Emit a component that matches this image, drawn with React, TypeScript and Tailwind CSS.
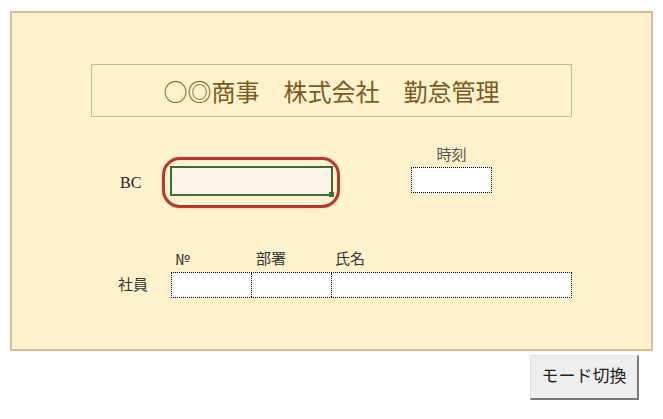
const font = { fontFamily: '"Liberation Serif", "Noto Sans CJK JP", serif' };
const cjk = { fontFamily: '"Noto Sans CJK JP", serif' };

export default function App() {
  return (
    <div className="w-[663px] h-[419px] bg-white pt-[11px] pl-[10px] overflow-hidden" style={font}>
      <div className="w-[643px] h-[340px] border-2 border-[#d8be93] bg-[#fff2cc]">
        <div
          className="ml-[79px] mt-[51px] w-[481px] h-[53px] border border-[#cfb68c] flex items-center justify-center text-[24px] leading-none text-[#7d5a22]"
          style={cjk}
        >
          ○◎商事　株式会社　勤怠管理
        </div>

        <div className="flex items-start mt-[30px]">
          <div className="ml-[108px] mt-[10px] flex items-center">
            <span className="w-[42px] text-[16px] text-[#222]">BC</span>
            <div className="w-[178px] h-[51px] border-[3px] border-[#b2392f] rounded-[18px] pl-[5px] pt-[6px] shadow-[0_0_2px_#f0a79a]">
              <div className="relative w-[163px] h-[30px] border-2 border-[#3e6b3c] bg-[#fcf6e9]">
                <span className="absolute -right-[3px] -bottom-[3px] w-[5px] h-[5px] bg-[#3e6b3c]" />
              </div>
            </div>
          </div>
          <div className="ml-[71px] w-[81px] flex flex-col items-center">
            <span className="h-[20px] text-[15px] leading-[16px] text-[#555]">時刻</span>
            <div className="w-[81px] h-[26px] border border-dotted border-black bg-white" />
          </div>
        </div>

        <div className="mt-[43px] flex">
          <div className="w-[159px] flex flex-col">
            <div className="h-[21px]" />
            <div className="h-[26px] pl-[106px] flex items-center text-[15px] text-[#333]">社員</div>
          </div>
          <div className="flex flex-col">
            <div className="h-[21px] flex items-start text-[15px] leading-[16px] text-[#333]">
              <span className="w-[81px] pl-[4px]" style={cjk}>№</span>
              <span className="w-[80px] pl-[4px]">部署</span>
              <span className="pl-[3px]">氏名</span>
            </div>
            <div className="h-[26px] w-[401px] flex border border-dotted border-black bg-white">
              <div className="w-[80px] border-r border-dotted border-black" />
              <div className="w-[80px] border-r border-dotted border-black" />
              <div className="flex-1" />
            </div>
          </div>
        </div>
      </div>

      <div className="ml-[520px] mt-[4px] w-[109px] h-[45px] flex items-center justify-center bg-[#efefef] border border-[#e2e2e2] border-r-2 border-b-2 border-r-[#7a7a7a] border-b-[#7a7a7a] text-[17px] text-[#222]">
        モード切換
      </div>
    </div>
  );
}
